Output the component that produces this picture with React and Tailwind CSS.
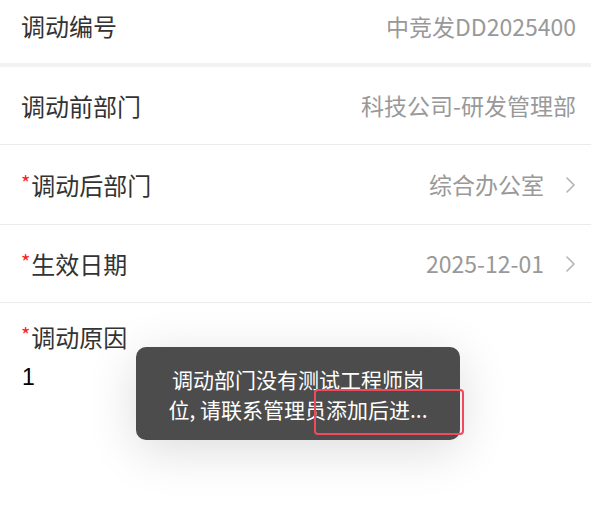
import React from "react";

const CJK = { fontFamily: '"Noto Sans CJK SC", "Noto Sans", sans-serif' };

function Chevron() {
  return (
    <svg width="11" height="18" viewBox="0 0 11 18" className="shrink-0">
      <path d="M2 2 L9 9 L2 16" fill="none" stroke="#b3b3b3" strokeWidth="1.6" strokeLinecap="round" strokeLinejoin="round" />
    </svg>
  );
}

function Row({ label, value, required, chevron, h, border = true, extra = "" }) {
  return (
    <div className={`flex items-center justify-between pl-[21px] pr-[15px] ${h} ${extra} ${border ? "border-b border-[#ebebeb]" : ""}`}>
      <div className="text-[24px] text-[#333333] leading-none flex items-center">
        {required && <span className="text-[#ff1a1a] text-[20px] mr-[1px] self-start leading-none">*</span>}
        <span>{label}</span>
      </div>
      <div className="flex items-center gap-[21px]">
        <span className="text-[23px] text-[#999999] leading-none">{value}</span>
        {chevron && <Chevron />}
      </div>
    </div>
  );
}

export default function App() {
  return (
    <div className="relative w-[591px] h-[531px] bg-white overflow-hidden" style={CJK}>
      <Row label="调动编号" value="中竞发DD2025400" h="h-[63px]" extra="pb-[11px]" border={false} />
      <div className="h-[4px] bg-[#f2f2f2]" />
      <Row label="调动前部门" value="科技公司-研发管理部" h="h-[78px]" />
      <Row label="调动后部门" value="综合办公室" required chevron h="h-[80px]" />
      <Row label="生效日期" value="2025-12-01" required chevron h="h-[78px]" />
      <div className="pl-[21px] pt-[18px]">
        <div className="text-[24px] text-[#333333] leading-[32px] flex">
          <span className="text-[#ff1a1a] text-[20px] leading-none mt-[4px] mr-[1px]">*</span>
          <span>调动原因</span>
        </div>
        <div className="mt-[11px] text-[23px] text-black leading-[26px] pl-[1px]" style={{ fontFamily: '"Liberation Sans", Arial, sans-serif' }}>1</div>
      </div>

      <div className="absolute left-[136px] top-[347px] w-[324px] h-[93px] rounded-[10px] bg-[#4c4c4c] shadow-[0_10px_50px_rgba(0,0,0,0.14)] flex flex-col items-center justify-center text-white text-[21px] leading-[30px]">
        <div>调动部门没有测试工程师岗</div>
        <div>位, 请联系管理员添加后进...</div>
      </div>
      <div className="absolute left-[314px] top-[389px] w-[150px] h-[46px] rounded-[4px] border-2 border-[#f04a5e]" />
    </div>
  );
}
